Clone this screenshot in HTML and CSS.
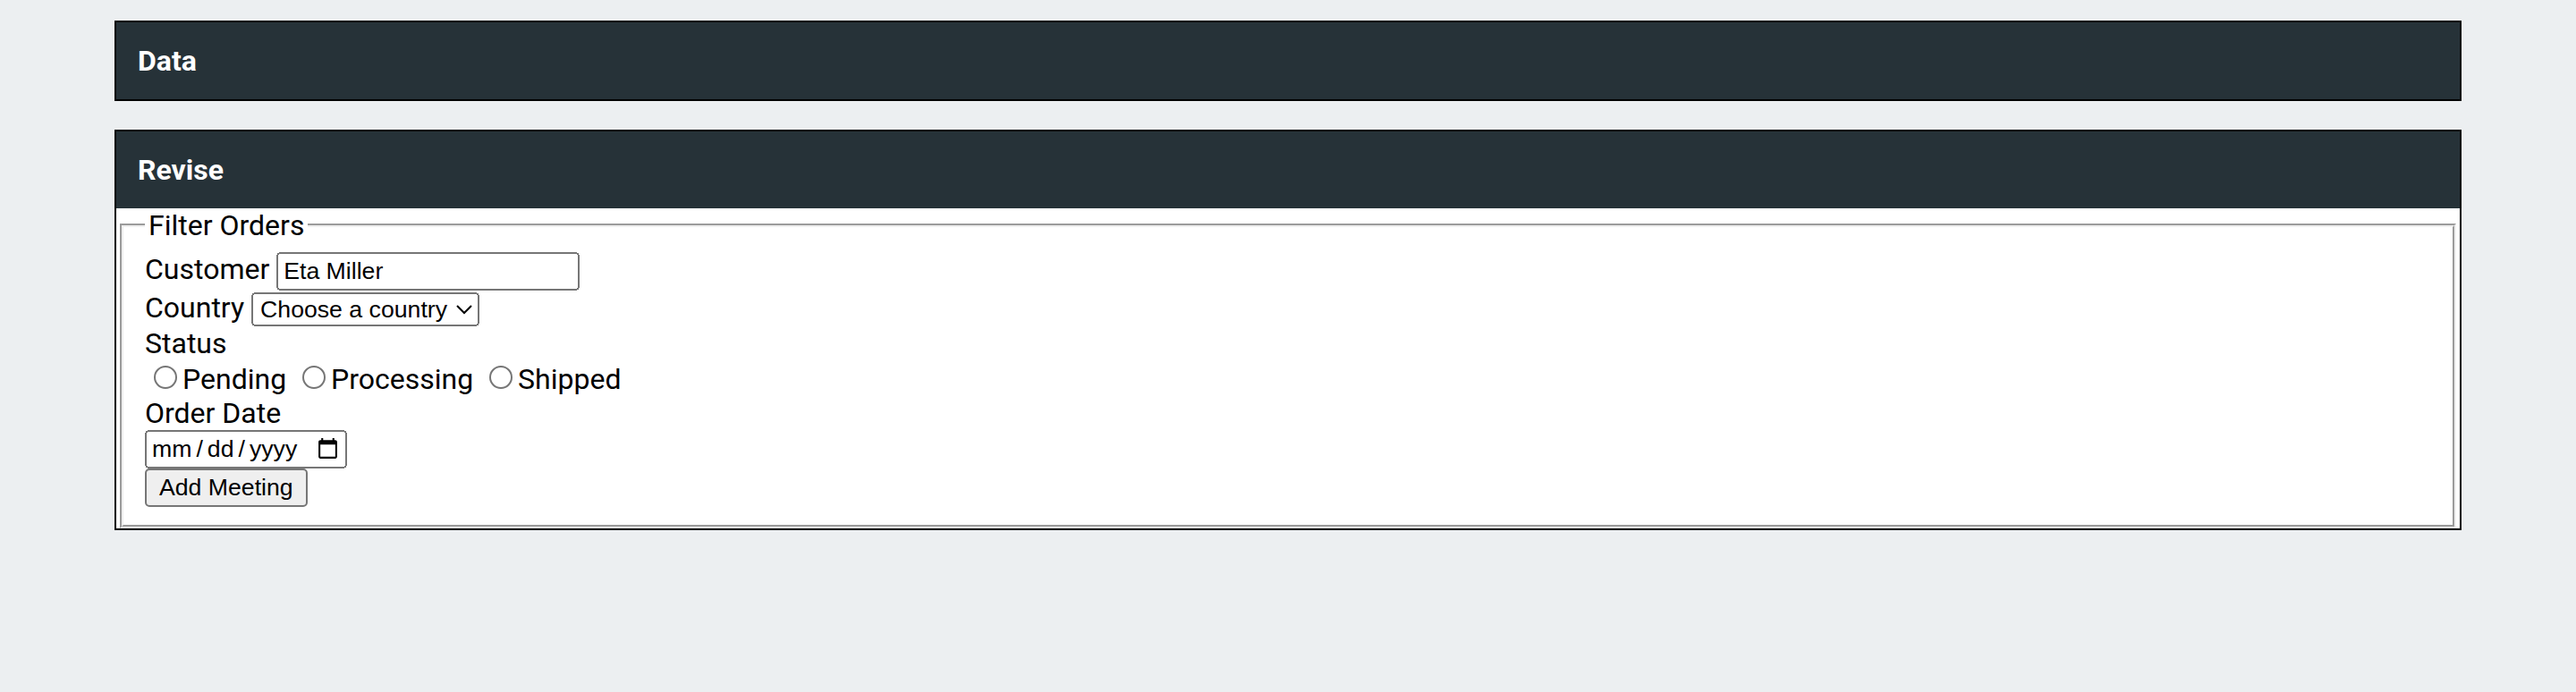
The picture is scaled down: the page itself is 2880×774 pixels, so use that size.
FILE: index.html
```html
<!DOCTYPE html>
<html lang="en">
<head>
<meta charset="utf-8">
<title>Orders</title>
<link rel="stylesheet" href="styles.css">
</head>
<body class="page">
<div class="container">
  <section class="card">
    <h2 class="card-title">Data</h2>
  </section>
  <section class="card">
    <h2 class="card-title">Revise</h2>
    <form class="card-body">
      <fieldset class="filter">
        <legend class="filter-legend">Filter Orders</legend>
        <label class="field">Customer <input class="control text-input" type="text" value="Eta Miller"></label><br>
        <label class="field">Country <select class="control select-input"><option>Choose a country</option></select></label><br>
        <span class="field">Status</span><br>
        <input class="radio" type="radio" name="status" id="s1"><label for="s1">Pending</label>
        <input class="radio" type="radio" name="status" id="s2"><label for="s2">Processing</label>
        <input class="radio" type="radio" name="status" id="s3"><label for="s3">Shipped</label><br>
        <label class="field" for="od">Order Date</label><br>
        <input class="control date-input" type="date" id="od"><br>
        <button class="control" type="button">Add Meeting</button>
      </fieldset>
    </form>
  </section>
</div>
</body>
</html>
```
FILE: styles.css
```css
html {
  background: #eceff1;
}
.page {
  zoom: 2;
  margin: 0;
  background: #eceff1;
  font-family: Roboto, "Noto Sans", sans-serif;
  font-size: 16px;
  color: #000;
}
.container {
  padding: 11.5px 64px 0;
}
.card {
  border: 1px solid #000;
  background: #fff;
  margin-bottom: 16px;
}
.card-title {
  margin: 0;
  padding: 12px;
  background: #263238;
  color: #fff;
  font-size: 16px;
  font-weight: 700;
  line-height: normal;
}
.card-body {
  margin: 0;
}
.filter {
  margin: 0 2px;
}
.control {
  font-family: "Liberation Sans", Arial, sans-serif;
  font-size: 13.333px;
}
.text-input {
  box-sizing: border-box;
  width: 169.5px;
}
.select-input {
  box-sizing: border-box;
  width: 127.5px;
}
.date-input {
  box-sizing: border-box;
  width: 112.8px;
}
.date-input::-webkit-datetime-edit-text {
  padding: 0 1.5px;
}
```
